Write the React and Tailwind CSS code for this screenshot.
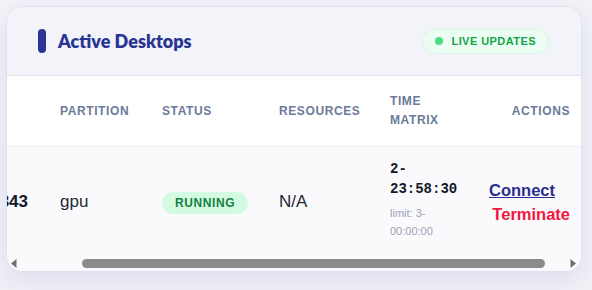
import { useEffect, useRef } from "react";

const SANS = "font-['Liberation_Sans',Arial,sans-serif]";

function LiveBadge() {
  return (
    <span className="flex h-[25px] items-center gap-2 rounded-full border border-[#d4f8e1] bg-[#ebfdf2] pl-3 pr-3">
      <span className="h-2 w-2 rounded-full bg-[#4ade80]" />
      <span className={`${SANS} text-[11px] font-bold tracking-[0.04em] text-[#16a34a]`}>LIVE UPDATES</span>
    </span>
  );
}

function ScrollArrow({ dir }) {
  return (
    <span className="flex h-[15px] w-[15px] items-center justify-center">
      <svg width="15" height="15" viewBox="0 0 15 15">
        {dir === "left" ? (
          <path d="M9.5 3 L4 7.5 L9.5 12 Z" fill="#6f6f6f" />
        ) : (
          <path d="M4.5 3 L10 7.5 L4.5 12 Z" fill="#6f6f6f" />
        )}
      </svg>
    </span>
  );
}

// headless page shows no native scrollbar, so draw the strip by hand
function ScrollStrip() {
  return (
    <div className="flex h-[15px] items-center bg-[#fafafd]">
      <ScrollArrow dir="left" />
      <div className="flex-1">
        <div className="ml-[60px] h-[9px] w-[463px] rounded-full bg-[#8b8b8b]" />
      </div>
      <ScrollArrow dir="right" />
    </div>
  );
}

function DesktopsTable() {
  const scroller = useRef(null);

  useEffect(() => {
    if (scroller.current) scroller.current.scrollLeft = 80;
  }, []);

  const th = "py-4 align-middle text-[12px] font-bold uppercase leading-[19px] tracking-[0.05em] text-[#6b7a99]";

  return (
    <div ref={scroller} className="overflow-hidden">
      <table className={`${SANS} w-[667px] table-fixed border-collapse`}>
        <colgroup>
          <col className="w-[109px]" />
          <col className="w-[102px]" />
          <col className="w-[117px]" />
          <col className="w-[111px]" />
          <col className="w-[110px]" />
          <col className="w-[118px]" />
        </colgroup>
        <thead className="bg-white">
          <tr className="border-b border-[#eef0f6]">
            <th className={`${th} pl-6 text-left`}>Job ID</th>
            <th className={`${th} pl-6 text-left`}>Partition</th>
            <th className={`${th} pl-6 text-left`}>Status</th>
            <th className={`${th} pl-6 text-left`}>Resources</th>
            <th className={`${th} pl-6 pr-3 text-left`}>Time Matrix</th>
            <th className={`${th} pr-6 text-right`}>Actions</th>
          </tr>
        </thead>
        <tbody className="bg-[#fafafd]">
          <tr>
            <td className="pr-[8px] text-right align-middle text-[17px] font-bold text-[#111827]">12343</td>
            <td className="pl-6 align-middle text-[17px] text-[#1f2937]">gpu</td>
            <td className="pl-6 align-middle">
              <span className="inline-flex h-[22px] items-center rounded-full bg-[#d3fbe3] px-[13px] text-[12px] font-bold tracking-[0.05em] text-[#15803d]">
                RUNNING
              </span>
            </td>
            <td className="pl-6 align-middle text-[17px] text-[#1f2937]">N/A</td>
            <td className="pl-6 pr-3 pt-3 pb-4 align-middle">
              <div className="font-['Liberation_Mono',monospace] text-[14px] font-bold leading-[20px] text-[#111827]">
                2-23:58:30
              </div>
              <div className="mt-[5px] text-[11px] leading-[18px] text-[#9aa1b6]">limit: 3-00:00:00</div>
            </td>
            <td className="pl-2 pr-6 align-middle">
              <div className="flex flex-col items-end">
                <a href="#" className="mr-[15px] text-[16.5px] font-bold leading-[20px] text-[#2b2f8f] underline">
                  Connect
                </a>
                <button className="mt-1 text-[16.5px] font-bold leading-[20px] text-[#f2163f]">Terminate</button>
              </div>
            </td>
          </tr>
        </tbody>
      </table>
    </div>
  );
}

export default function App() {
  return (
    <div className="min-h-screen bg-[#f2f2f7] pl-[6px] pt-[6px]">
      <div className="w-[576px] overflow-hidden rounded-2xl border border-[#dfe1ef] bg-white shadow-[0_10px_28px_rgba(40,53,147,0.10)]">
        <div className="flex h-[69px] items-center justify-between border-b border-[#e2e4f0] bg-[#f3f3fa] pl-[31px] pr-8">
          <div className="flex items-center gap-3">
            <span className="h-6 w-2 rounded-full bg-[#283593]" />
            <h2 className="font-['Lato',sans-serif] text-[18px] font-extrabold text-[#283593]">Active Desktops</h2>
          </div>
          <LiveBadge />
        </div>
        <DesktopsTable />
        <ScrollStrip />
      </div>
    </div>
  );
}
